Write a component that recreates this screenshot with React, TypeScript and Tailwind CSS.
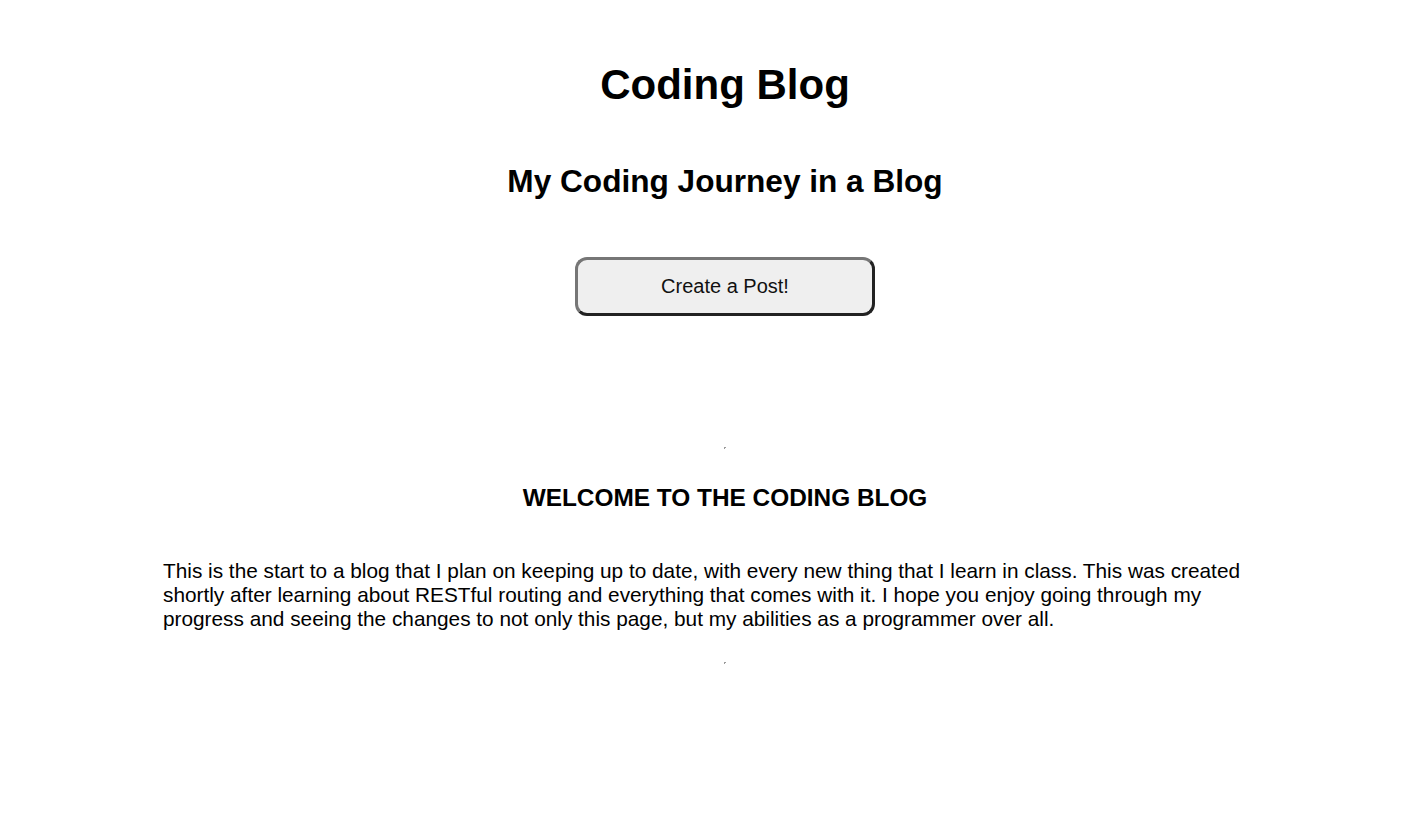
export default function App() {
  return (
    <div className="min-h-screen bg-white text-black" style={{ fontFamily: '"Liberation Sans", Arial, sans-serif' }}>
      <div className="ml-[163px] w-[1124px] pt-[61px]">
        <div className="flex flex-col items-center">
          <h1 className="text-[42px] font-bold leading-[48px]">Coding Blog</h1>
          <h2 className="mt-[54px] text-[31.6px] font-bold leading-[37px]">My Coding Journey in a Blog</h2>
          <button className="mt-[57px] h-[59px] w-[300px] rounded-[12px] border-[3px] border-t-[#767676] border-l-[#767676] border-b-[#222222] border-r-[#222222] bg-[#efefef] pb-[2px] text-[20px] text-[#111]">
            Create a Post!
          </button>
          <div className="mt-[131px] h-[2px] w-[2px] border-t border-l border-t-[#9a9a9a] border-l-[#9a9a9a]" />
          <h3 className="mt-[35px] text-[24.4px] font-bold leading-[28px]">WELCOME TO THE CODING BLOG</h3>
        </div>
        <p className="mt-[47px] text-[20.8px] leading-[24px]">
          This is the start to a blog that I plan on keeping up to date, with every new thing that I learn in class. This was created shortly after learning about RESTful routing and everything that comes with it. I hope you enjoy going through my progress and seeing the changes to not only this page, but my abilities as a programmer over all.
        </p>
        <div className="flex justify-center">
          <div className="mt-[31px] h-[2px] w-[2px] border-t border-l border-t-[#9a9a9a] border-l-[#9a9a9a]" />
        </div>
      </div>
    </div>
  );
}
